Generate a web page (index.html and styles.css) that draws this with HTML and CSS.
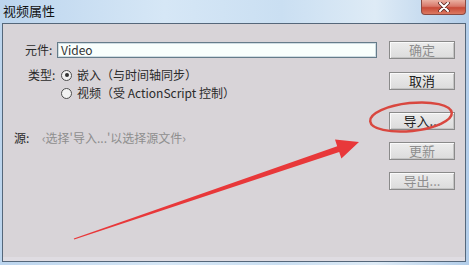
FILE: index.html
```html
<!DOCTYPE html>
<html lang="zh-CN">
<head>
    <meta charset="UTF-8">
    <meta name="viewport" content="width=device-width, initial-scale=1.0">
    <title>视频属性</title>
    <link rel="stylesheet" href="styles.css">
</head>
<body>
    <div class="window">
        <div class="titlebar">
            <span class="title">视频属性</span>
            <span class="close-btn">
                <svg width="14" height="10" viewBox="0 0 14 10">
                    <path d="M3 1 L11 9 M11 1 L3 9" stroke="#5a2a24" stroke-width="3.6" stroke-linecap="round"/>
                    <path d="M3 1 L11 9 M11 1 L3 9" stroke="#fff" stroke-width="2" stroke-linecap="round"/>
                </svg>
            </span>
        </div>

        <div class="panel">
            <div class="form">
                <div class="name-row">
                    <span class="label">元件:</span>
                    <div class="text-input">Video</div>
                </div>

                <div class="type-row">
                    <span class="label">类型:</span>
                    <div class="options">
                        <div class="option"><span class="radio checked"></span>嵌入（与时间轴同步）</div>
                        <div class="option"><span class="radio"></span>视频（受 ActionScript 控制）</div>
                    </div>
                </div>

                <div class="source-row">
                    <span class="label">源:</span>
                    <span class="source-hint">‹选择'导入...'以选择源文件›</span>
                </div>
            </div>

            <div class="buttons">
                <div class="btn disabled">确定</div>
                <div class="btn btn-cancel">取消</div>
                <div class="btn btn-import">导入...</div>
                <div class="btn disabled">更新</div>
                <div class="btn disabled">导出...</div>
            </div>
        </div>

        <!-- 标注：红圈和箭头 -->
        <svg class="annotation" width="469" height="265" viewBox="0 0 469 265">
            <ellipse cx="411" cy="117" rx="41" ry="14" transform="rotate(-6 411 117)" fill="none" stroke="#d9473f" stroke-width="2.5"/>
            <polygon points="73.8,238.5 337.2,146.3 335,139.6 359,142 341.4,158.6 339.2,151.9 74.2,239.5" fill="#e8383a"/>
        </svg>
    </div>
</body>
</html>
```

FILE: styles.css
```css
:root {
    --panel-color: #d8d4d8;
    --panel-border: #55677a;
    --text-color: #2a2a2a;
    --muted-color: #8e8e8e;
}
body {
    margin: 0;
    padding: 0;
    font-family: 'Noto Sans CJK SC', 'Noto Sans', sans-serif;
    font-size: 12px;
    color: var(--text-color);
}
.window {
    position: relative;
    width: 469px;
    height: 265px;
    overflow: hidden;
    background: linear-gradient(to right, #bcd5ee 0%, #d6e7f6 35%, #cadff2 60%, #deebf6 80%, #b2cde9 100%);
}
.titlebar {
    height: 23px;
    display: flex;
    justify-content: space-between;
    align-items: flex-start;
}
.title {
    margin: 2px 0 0 3px;
    font-size: 13px;
    line-height: 18px;
    color: #111;
}
.close-btn {
    width: 45px;
    height: 15px;
    margin-right: 3px;
    display: flex;
    align-items: center;
    justify-content: center;
    border: 1px solid #8a4a42;
    border-top: none;
    border-radius: 0 0 4px 4px;
    background: linear-gradient(#eab0a2 0%, #d8786a 45%, #c84a38 55%, #dc7a62 100%);
    box-sizing: border-box;
}
.panel {
    margin-left: 2px;
    width: 464px;
    height: 239px;
    box-sizing: border-box;
    border: 1px solid var(--panel-border);
    background-color: var(--panel-color);
    box-shadow: inset 0 -4px 0 #dfdce2;
    display: grid;
    grid-template-columns: 1fr 66px;
    padding: 17px 10px 0 22px;
}
.label {
    line-height: 16px;
}
.name-row {
    display: flex;
    align-items: center;
    margin-top: 1px;
}
.name-row .label {
    width: 32px;
}
.text-input {
    width: 320px;
    height: 16px;
    box-sizing: border-box;
    border: 1px solid #657c8a;
    box-shadow: inset 0 0 0 1px #cfdde3;
    background-color: #f9fffd;
    padding-left: 3px;
    line-height: 14px;
    font-size: 12px;
    color: #333;
}
.type-row {
    display: flex;
    margin-top: 8px;
    margin-left: 3px;
}
.type-row .label {
    width: 33px;
    line-height: 18px;
}
.option {
    display: flex;
    align-items: center;
    height: 18px;
    line-height: 18px;
}
.radio {
    width: 11px;
    height: 11px;
    box-sizing: border-box;
    border: 1px solid #4d4d4d;
    border-radius: 50%;
    background-color: #f2f2f2;
    margin-right: 5px;
    position: relative;
}
.radio.checked::after {
    content: '';
    position: absolute;
    left: 2.5px;
    top: 2.5px;
    width: 4px;
    height: 4px;
    border-radius: 50%;
    background-color: #333;
}
.source-row {
    display: flex;
    align-items: center;
    margin-top: 27px;
    margin-left: -11px;
    line-height: 18px;
}
.source-row .label {
    width: 28px;
    line-height: 18px;
}
.source-hint {
    color: var(--muted-color);
}
.buttons {
    display: flex;
    flex-direction: column;
}
.btn {
    height: 18px;
    box-sizing: border-box;
    border: 1px solid #8a8a8a;
    box-shadow: inset 1px 1px 0 #fafafa, inset -1px -1px 0 #c4c4c4;
    background: linear-gradient(#ececec, #dcdcdc);
    text-align: center;
    font-size: 13px;
    line-height: 16px;
    color: #222;
}
.btn.disabled {
    color: var(--muted-color);
}
.btn-cancel {
    margin-top: 13px;
}
.btn-import {
    margin-top: 22px;
}
.btn-import + .btn,
.btn-import + .btn + .btn {
    margin-top: 12px;
}
.annotation {
    position: absolute;
    left: 0;
    top: 0;
    pointer-events: none;
}
```
